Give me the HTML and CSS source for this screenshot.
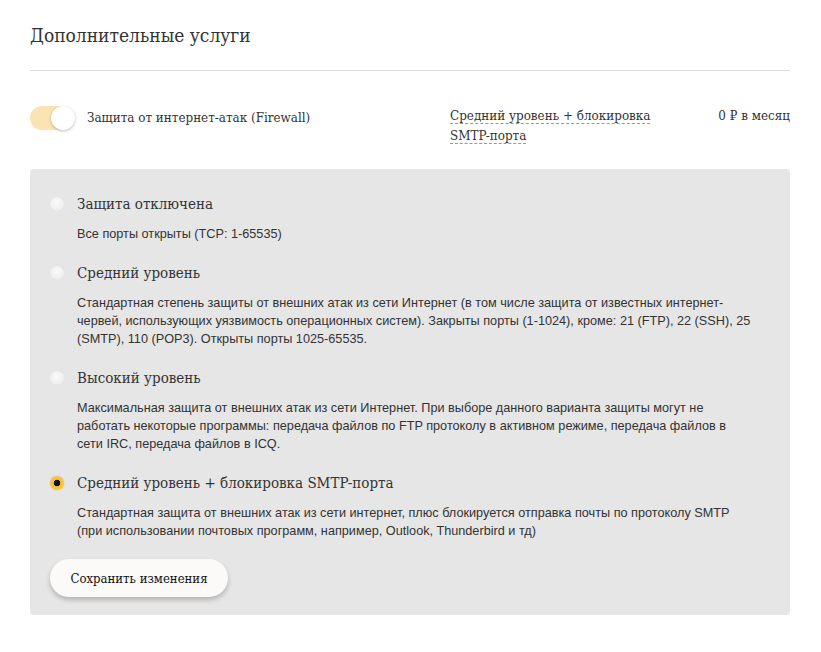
FILE: index.html
```html
<!DOCTYPE html>
<html lang="ru">
<head>
    <meta charset="UTF-8">
    <meta name="viewport" content="width=device-width, initial-scale=1.0">
    <title>Дополнительные услуги</title>
    <link rel="stylesheet" href="styles.css">
</head>
<body>
    <div class="page">
        <h1 class="page-title">Дополнительные услуги</h1>

        <div class="service-row">
            <div class="service-name">
                <span class="toggle toggle-on"><span class="toggle-knob"></span></span>
                <span>Защита от интернет-атак (Firewall)</span>
            </div>
            <div class="service-option">
                <span class="dashed">Средний уровень + блокировка SMTP-порта</span>
            </div>
            <div class="service-price">0 ₽ в месяц</div>
        </div>

        <div class="options">
            <div class="option">
                <div class="option-title"><span class="radio"></span>Защита отключена</div>
                <div class="option-desc">Все порты открыты (TCP: 1-65535)</div>
            </div>

            <div class="option">
                <div class="option-title"><span class="radio"></span>Средний уровень</div>
                <div class="option-desc">Стандартная степень защиты от внешних атак из сети Интернет (в том числе защита от известных интернет-червей, использующих уязвимость операционных систем). Закрыты порты (1-1024), кроме: 21 (FTP), 22 (SSH), 25 (SMTP), 110 (POP3). Открыты порты 1025-65535.</div>
            </div>

            <div class="option">
                <div class="option-title"><span class="radio"></span>Высокий уровень</div>
                <div class="option-desc">Максимальная защита от внешних атак из сети Интернет. При выборе данного варианта защиты могут не работать некоторые программы: передача файлов по FTP протоколу в активном режиме, передача файлов в сети IRC, передача файлов в ICQ.</div>
            </div>

            <div class="option">
                <div class="option-title"><span class="radio radio-checked"></span>Средний уровень + блокировка SMTP-порта</div>
                <div class="option-desc">Стандартная защита от внешних атак из сети интернет, плюс блокируется отправка почты по протоколу SMTP (при использовании почтовых программ, например, Outlook, Thunderbird и тд)</div>
            </div>

            <button class="btn-save">Сохранить изменения</button>
        </div>
    </div>
</body>
</html>
```

FILE: styles.css
```css
* {
    margin: 0;
    padding: 0;
    box-sizing: border-box;
}

body {
    font-family: 'DejaVu Serif', 'Liberation Serif', serif;
    background: #fff;
    color: #222;
}

.page {
    padding: 22px 31px 36px 30px;
}

.page-title {
    font-size: 19px;
    font-weight: normal;
    color: #333;
    font-stretch: condensed;
    line-height: 26px;
    padding-bottom: 22px;
    border-bottom: 1px solid #dcdcdc;
}

.service-row {
    display: flex;
    align-items: flex-start;
    padding: 35px 0 23px;
    font-size: 13.3px;
    font-stretch: condensed;
    line-height: 20px;
    color: #333;
}

.service-name {
    display: flex;
    align-items: center;
    gap: 12px;
    width: 420px;
}

.toggle {
    display: inline-block;
    position: relative;
    width: 45px;
    height: 24px;
    border-radius: 12px;
    background: #fbe3b3;
}

.toggle-knob {
    position: absolute;
    top: 0;
    right: 0;
    width: 24px;
    height: 24px;
    border-radius: 50%;
    background: #fff;
    box-shadow: 0 1px 3px rgba(0, 0, 0, 0.25);
}

.service-option {
    width: 210px;
}

.dashed {
    border-bottom: 1px dashed #999;
}

.service-price {
    flex: 1;
    text-align: right;
}

.options {
    background: #e6e6e6;
    border-radius: 4px;
    padding: 23px 20px 18px;
}

.option {
    margin-bottom: 18px;
}

.option-title {
    display: flex;
    align-items: center;
    font-size: 15px;
    font-stretch: condensed;
    line-height: 24px;
    color: #333;
    margin-bottom: 9px;
}

.radio {
    display: inline-block;
    width: 14px;
    height: 14px;
    border-radius: 50%;
    margin-right: 13px;
    background: radial-gradient(circle at 50% 40%, #fafafa 0%, #f0f0f0 60%, #e2e2e2 100%);
    box-shadow: 0 0 1px rgba(0, 0, 0, 0.08);
}

.radio-checked {
    background: radial-gradient(circle, #111 0, #111 3px, #f4c23a 3.6px, #f7c840 100%);
    box-shadow: 0 0 1px rgba(160, 110, 0, 0.6);
}

.option-desc {
    font-family: 'Liberation Sans', Arial, sans-serif;
    font-size: 12.7px;
    line-height: 18px;
    color: #333;
    padding-left: 27px;
    padding-right: 16px;
}

.btn-save {
    margin-top: 1px;
    font-family: 'DejaVu Serif', 'Liberation Serif', serif;
    font-size: 13px;
    font-stretch: condensed;
    color: #111;
    background: #fbfaf9;
    border: none;
    border-radius: 19px;
    width: 178px;
    height: 38px;
    box-shadow: 0 3px 5px rgba(0, 0, 0, 0.22);
    cursor: pointer;
}
```
